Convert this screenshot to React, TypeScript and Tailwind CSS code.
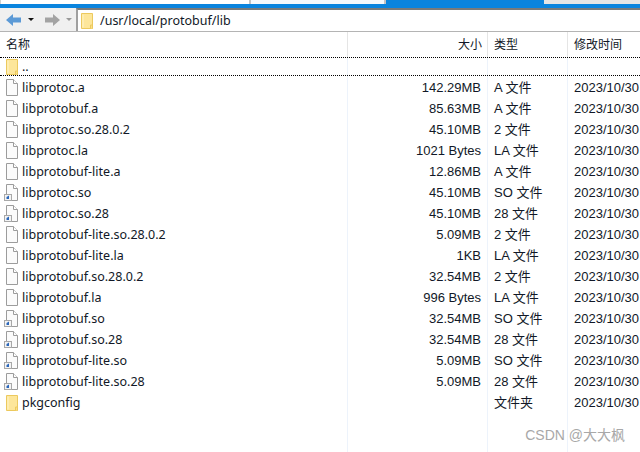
type Row = { name: string; size: string; type: string; kind: 'file' | 'link' | 'folder' }

const rows: Row[] = [
  { name: 'libprotoc.a', size: '142.29MB', type: 'A 文件', kind: 'file' },
  { name: 'libprotobuf.a', size: '85.63MB', type: 'A 文件', kind: 'file' },
  { name: 'libprotoc.so.28.0.2', size: '45.10MB', type: '2 文件', kind: 'file' },
  { name: 'libprotoc.la', size: '1021 Bytes', type: 'LA 文件', kind: 'file' },
  { name: 'libprotobuf-lite.a', size: '12.86MB', type: 'A 文件', kind: 'file' },
  { name: 'libprotoc.so', size: '45.10MB', type: 'SO 文件', kind: 'link' },
  { name: 'libprotoc.so.28', size: '45.10MB', type: '28 文件', kind: 'link' },
  { name: 'libprotobuf-lite.so.28.0.2', size: '5.09MB', type: '2 文件', kind: 'file' },
  { name: 'libprotobuf-lite.la', size: '1KB', type: 'LA 文件', kind: 'file' },
  { name: 'libprotobuf.so.28.0.2', size: '32.54MB', type: '2 文件', kind: 'file' },
  { name: 'libprotobuf.la', size: '996 Bytes', type: 'LA 文件', kind: 'file' },
  { name: 'libprotobuf.so', size: '32.54MB', type: 'SO 文件', kind: 'link' },
  { name: 'libprotobuf.so.28', size: '32.54MB', type: '28 文件', kind: 'link' },
  { name: 'libprotobuf-lite.so', size: '5.09MB', type: 'SO 文件', kind: 'link' },
  { name: 'libprotobuf-lite.so.28', size: '5.09MB', type: '28 文件', kind: 'link' },
  { name: 'pkgconfig', size: '', type: '文件夹', kind: 'folder' },
]

function FolderIcon() {
  return (
    <svg width="12" height="16" viewBox="0 0 12 16" className="shrink-0">
      <path d="M.5 .5h11v15H.5z" fill="#fde69a" stroke="#ecc95e" />
      <path d="M1.500 1.500h1v13h-1z" fill="#fff3c8" />
      <path d="M9.500 15.500v-3.500h2v3.500" fill="#fbdf85" stroke="#ecc95e" />
    </svg>
  )
}

function FileIcon({ link }: { link?: boolean }) {
  return (
    <svg width="14" height="17" viewBox="0 0 14 17" className="shrink-0">
      <path d="M2.500 .5h7l4 4v12h-11z" fill="#fbfbfb" stroke="#9c9c9c" />
      <path d="M9.500 .5v4h4" fill="#fff" stroke="#9c9c9c" />
      {link && (
        <>
          <rect x=".5" y="10.500" width="7" height="6" fill="#f4f4f4" stroke="#a8a8a8" />
          <path d="M2.500 15v-2l2.500-1.500v3.500z" fill="#2a66ba" />
        </>
      )}
    </svg>
  )
}

function BackIcon() {
  return (
    <svg width="15" height="12" viewBox="0 0 15 12" className="shrink-0">
      <path d="M0 6L7 0v3.500h8v5H7V12z" fill="#5c9ad6" />
    </svg>
  )
}

function ForwardIcon() {
  return (
    <svg width="15" height="12" viewBox="0 0 15 12" className="shrink-0">
      <path d="M15 6L8 0v3.500H0v5h8V12z" fill="#a3a3a3" />
    </svg>
  )
}

function Cols({ name, size, type, date }: { name?: React.ReactNode; size?: string; type?: string; date?: string }) {
  return (
    <>
      <div className="w-[347px] shrink-0 flex items-center">{name}</div>
      <div className="w-[140px] shrink-0 text-right pr-[6px] border-l border-[#edf3fb] text-[13px] font-['Liberation_Sans','Noto_Sans_CJK_SC',sans-serif]">{size}</div>
      <div className="w-[80px] shrink-0 pl-[6px] border-l border-[#edf3fb] text-[13px] font-['Liberation_Sans','Noto_Sans_CJK_SC',sans-serif]">{type}</div>
      <div className="flex-1 pl-[6px] border-l border-[#edf3fb] text-[13px] whitespace-nowrap font-['Liberation_Sans','Noto_Sans_CJK_SC',sans-serif]">{date}</div>
    </>
  )
}

export default function App() {
  return (
    <div className="w-[640px] h-[452px] bg-white overflow-hidden flex flex-col text-[12.5px] leading-[21px] text-[#111827] font-['Noto_Sans','Noto_Sans_CJK_SC',sans-serif]">
      <div className="h-1 flex">
        <div className="w-[249px] bg-white border-l border-[#d0d0d0]" />
        <div className="w-[137px] bg-[#f6f9fc] border-x-2 border-[#c4c4c4]" />
        <div className="w-[158px] bg-[#0a84de]" />
        <div className="flex-1 bg-[#e5e5e5]" />
      </div>
      <div className="h-1 bg-[#0a84de]" />

      <div className="h-[24px] flex bg-[#f0f0f0] border-b border-[#b4b4b4]">
        <div className="w-[76px] shrink-0 flex items-center pl-[6px]">
          <BackIcon />
          <span className="ml-[7px] border-x-[3px] border-t-[3px] border-x-transparent border-t-[#111]" />
          <span className="ml-[11px]" />
          <ForwardIcon />
          <span className="ml-[6px] border-x-[3px] border-t-[3px] border-x-transparent border-t-[#999]" />
        </div>
        <div className="flex-1 bg-white border-l-2 border-t-2 border-l-[#a0a0a0] border-t-[#7a7a7a] flex items-center pl-[3px] gap-[7px]">
          <FolderIcon />
          <span>/usr/local/protobuf/lib</span>
        </div>
      </div>

      <div className="h-[25px] flex items-center text-[12px] pl-[6px] font-['Liberation_Sans','Noto_Sans_CJK_SC',sans-serif]">
        <div className="w-[341px] shrink-0 pt-px">名称</div>
        <div className="w-[140px] shrink-0 self-stretch flex items-center justify-end pt-px pr-[5px] border-l border-[#e5e5e5]">大小</div>
        <div className="w-[80px] shrink-0 self-stretch flex items-center pt-px pl-[6px] border-l border-[#e5e5e5]">类型</div>
        <div className="flex-1 self-stretch flex items-center pt-px pl-[6px] border-l border-[#e5e5e5] whitespace-nowrap">修改时间</div>
      </div>

      <div className="relative flex-1 flex flex-col">
        <div className="h-[19px] flex border-y border-dotted border-black">
          <Cols
            name={
              <div className="flex items-center pl-[6px] gap-[4px]">
                <FolderIcon />
                <span>..</span>
              </div>
            }
          />
        </div>
        <div className="h-px flex">
          <Cols />
        </div>
        {rows.map((row) => (
          <div key={row.name} className="h-[21px] flex">
            <Cols
              name={
                row.kind === 'folder' ? (
                  <div className="flex items-center pl-[6px] gap-[4px]">
                    <FolderIcon />
                    <span>{row.name}</span>
                  </div>
                ) : (
                  <div className="flex items-center pl-[4px] gap-[4px]">
                    <FileIcon link={row.kind === 'link'} />
                    <span>{row.name}</span>
                  </div>
                )
              }
              size={row.size}
              type={row.type}
              date="2023/10/30"
            />
          </div>
        ))}
        <div className="flex-1 flex">
          <Cols />
        </div>
        <div className="absolute right-[15px] bottom-[9px] text-[14px] leading-4 text-[#a8a8a8] font-['Liberation_Sans','Noto_Sans_CJK_SC',sans-serif]">CSDN @大大枫</div>
      </div>
    </div>
  )
}
